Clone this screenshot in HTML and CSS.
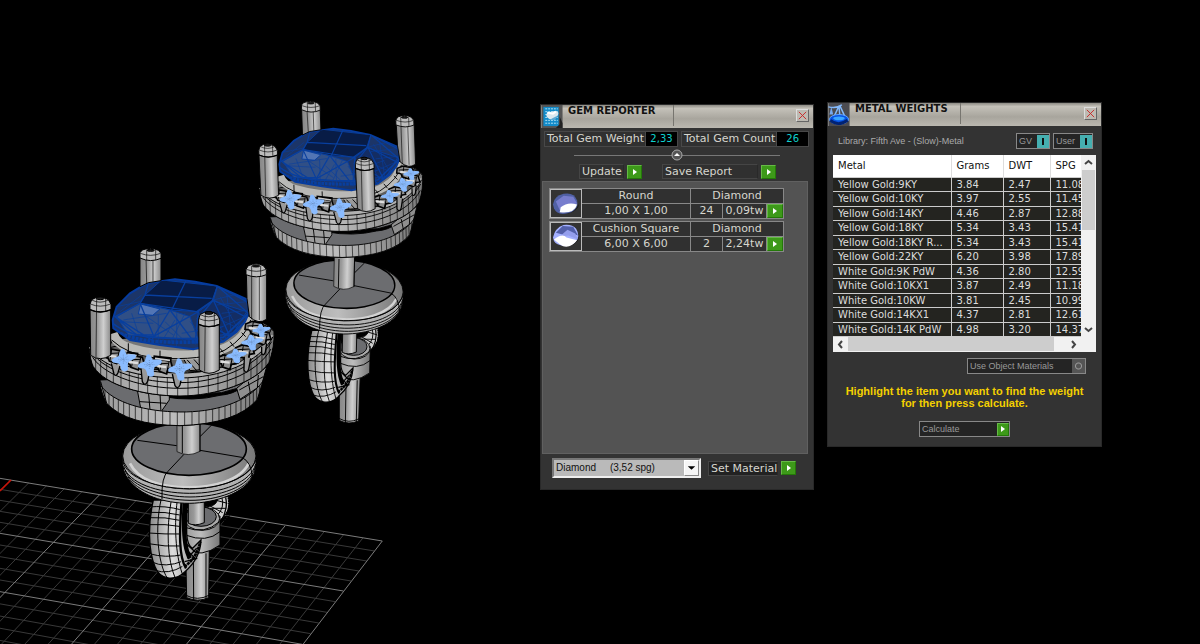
FILE: index.html
```html
<!DOCTYPE html>
<html lang="en">
<head>
<meta charset="utf-8">
<title>Gem Reporter</title>
<link rel="stylesheet" href="styles.css">
</head>
<body>
<main class="viewport">
<svg class="scene" width="540" height="644" viewBox="0 0 540 644" aria-hidden="true">
  <defs>
    <linearGradient id="post"><stop offset="0" stop-color="#858585"/><stop offset=".35" stop-color="#999"/><stop offset=".65" stop-color="#cfcfcf"/><stop offset="1" stop-color="#8a8a8a"/></linearGradient>
    <linearGradient id="rim"><stop offset="0" stop-color="#9a9a9a"/><stop offset=".45" stop-color="#bdbdbd"/><stop offset="1" stop-color="#777"/></linearGradient>
    <linearGradient id="tube"><stop offset="0" stop-color="#888"/><stop offset=".45" stop-color="#ddd"/><stop offset="1" stop-color="#888"/></linearGradient>
    <clipPath id="gemclip"><path d="M98 240L110 200L150 160L200 130L285 118L345 125L410 138L500 178L508 215L495 245L470 275L430 305L340 328L240 315L150 300L100 265Z"/></clipPath>
    <clipPath id="hookclip"><path d="M160 300C144 370 144 450 165 500C180 540 225 545 255 515C240 500 236 440 240 300Z"/></clipPath>
    <clipPath id="lowerclip"><path d="M62 436C100 490 200 515 300 516S500 490 548 425L532 478Q470 552 300 557Q140 555 80 490Z"/></clipPath>
    <clipPath id="upperclip"><path d="M30 325C70 385 180 413 300 413S540 365 578 290Q580 330 565 368C530 425 410 468 300 468S75 435 42 382Q32 360 30 325Z"/></clipPath>
    <g id="pillar">
      <path d="M0 28L2 175Q30 195 62 175V28Z" fill="url(#post)" stroke="#000" stroke-width="3"/>
      <path d="M0 38V22L5 8Q30-8 55 8L63 22V38Q30 52 0 38Z" fill="#bcbcbc" stroke="#000" stroke-width="3"/>
      <path d="M1 21Q30 34 62 21M5 9Q30 22 55 9M20 0L18 180M47 2V44" fill="none" stroke="#000" stroke-width="2"/>
      <path d="M0 38Q30 52 63 38" fill="none" stroke="#000" stroke-width="4"/>
      <ellipse cx="31" cy="4" rx="12" ry="4" fill="#222"/>
    </g>
    <g id="star">
      <path d="M-6-27Q-1-31 3-24L8-12Q22-14 34-12Q38-9 32-4L15 5Q9 10 12 30Q5 38-4 30Q-6 14-14 10L-30 7Q-35 3-28-1L-12-8Z" fill="#8bbcff" stroke="#8bbcff" stroke-width="5"/>
      <path d="M-11-8L10 10M-11 6L12-8M-15 0H16M0-14V13" stroke="#6485b4" stroke-width="2" stroke-dasharray="3 3"/>
    </g>
    <g id="prong">
      <path d="M-28-12L-8-20L22-14L28 6L14 8L10 24L-12 16L-16 6L-30 4Z" fill="#8d8d8d" stroke="#000" stroke-width="5"/>
      <path d="M-23-6L16-8M-5-18L-10 14M17-12L10 22" stroke="#000" stroke-width="3"/>
      <path d="M-18 0L9 3" stroke="#ddd" stroke-width="7"/>
    </g>
    <g id="base">
      <g transform="translate(100 400) scale(.3333)" fill="none" stroke="#000" stroke-width="3">
        <path d="M257 450L260 593Q292 608 326 593L328 450Z" fill="url(#post)"/>
        <path d="M280 455L281 602M318 460V600M258 586Q292 604 327 586"/>
        <path d="M310 320C340 322 355 310 352 290H386Q394 335 361 360L335 338Z" fill="#ccc"/>
        <path d="M365 290Q376 323 350 348M325 315L368 338M330 325L378 325M345 300L382 310M320 336L358 351"/>
        <path d="M388 292Q396 337 370 376" stroke-width="11" stroke-dasharray="6 2"/>
        <path d="M377 292Q385 330 362 365" stroke-width="4"/>
        <path d="M255 365V450Q305 475 360 435V348Z" fill="url(#rim)"/>
        <ellipse cx="306" cy="356" rx="53" ry="35" fill="#aaa"/>
        <ellipse cx="303" cy="350" rx="46" ry="29" fill="#6c6d70"/>
        <path d="M265 300V370Q285 380 313 368V300Z" fill="url(#post)"/>
        <path d="M255 382Q315 405 358 365M256 405Q320 430 360 395"/>
        <path d="M160 300C144 370 144 450 165 500C180 540 225 545 255 515Q301 475 303 420L278 445Q262 438 260 400V300Z" fill="url(#tube)" stroke-width="4"/>
        <g clip-path="url(#hookclip)">
          <path d="M183 300C165 380 172 490 203 536M214 300C198 390 202 480 226 535M232 300C220 390 230 480 250 530"/>
          <path d="M145 321Q195 316 245 330M145 337Q195 334 245 346M145 353Q195 350 245 362M145 374Q195 371 245 380M145 399Q195 403 245 402M145 431Q195 441 245 438M148 461Q195 475 250 464M155 486Q195 505 250 483M165 511Q205 525 250 498"/>
        </g>
        <path d="M245 300C238 400 236 470 258 505" stroke-width="7"/>
        <path d="M255 300C248 390 255 450 270 475" stroke-width="13"/>
        <path d="M253 500Q290 475 301 425" stroke-width="8" stroke-dasharray="9 2"/>
        <path d="M257 430L290 460M255 445L285 475M262 475L290 445M254 485L292 475" stroke-width="4"/>
        <path d="M68 178Q66 215 87 240C120 285 190 310 268 310C350 309 430 278 455 235Q470 215 468 170Z" fill="#b2b2b2"/>
        <ellipse cx="268" cy="168" rx="200" ry="99" fill="url(#rim)"/>
        <path d="M90 190C120 250 205 262 268 262S420 245 446 190" stroke="#d2d2d2" stroke-width="8"/>
        <ellipse cx="267" cy="147" rx="172" ry="79" fill="#6c6d70" stroke-width="5"/>
        <path d="M69 185C80 235 175 266 268 266S450 235 467 180M71 199C85 248 170 279 268 280S454 246 467 192M76 213C95 260 185 291 270 291S450 261 465 204M84 230C110 275 190 300 270 301S440 271 460 222" stroke-width="3"/>
        <path d="M112 121L230 137M335 75L300 110M300 151L425 172Q455 185 457 235M252 163L204 214Q184 230 186 297"/>
        <path d="M231 50V155Q264 173 300 154V50Z" fill="url(#post)" stroke-width="2"/>
        <path d="M247 65V160M300 60V155"/>
      </g>
    </g>
    <g id="crown">
      <g transform="translate(80 240) scale(.3333)" fill="none" stroke="#000" stroke-width="3">
        <path d="M60 420Q60 455 80 490Q140 555 300 557Q470 550 532 478L558 400Z" fill="#6b6c6f"/>
        <path d="M250 470Q340 486 420 466Q460 463 490 440L425 458Q370 462 280 458Z" fill="#000"/>
        <path d="M172 450L183 510L240 520L268 480V450Z" fill="#9d9d9d"/>
        <path d="M205 450L210 510M180 485L260 490M240 460L243 518"/>
        <path d="M470 445L480 478L545 435L560 380L500 420Z" fill="#8f8f8f"/>
        <path d="M478 450L550 410M505 425L512 465M535 405L532 445"/>
        <g clip-path="url(#lowerclip)">
          <rect x="55" y="420" width="500" height="140" fill="url(#rim)" stroke="none"/>
          <path d="M75 420V560M87 420V560M100 420V560M115 420V560M131 420V560M148 420V560M166 420V560M185 420V560M205 420V560M226 420V560M248 420V560M270 420V560M292 420V560M314 420V560M336 420V560M357 420V560M378 420V560M398 420V560M417 420V560M435 420V560M452 420V560M468 420V560M483 420V560M497 420V560M509 420V560M520 420V560M530 420V560M539 420V560" stroke-width="2"/>
        </g>
        <path d="M62 436C100 490 200 515 300 516S500 490 548 425M80 490Q140 555 300 557Q470 552 532 478M62 425L80 490M558 395L532 478"/>
        <path d="M28 318Q30 360 42 382C75 435 190 468 300 468S530 425 565 370Q585 320 582 275Q560 240 500 240L100 300Z" fill="#777"/>
        <g clip-path="url(#upperclip)">
          <rect x="20" y="270" width="570" height="210" fill="url(#rim)" stroke="none"/>
          <path d="M47 320V470M62 320V470M80 320V470M100 320V470M123 320V470M148 320V470M175 320V470M203 320V470M232 320V470M262 320V470M293 320V470M324 320V470M355 320V470M385 320V470M414 320V470M442 320V470M468 320V470M492 320V470M513 320V470M531 300V470M546 290V470M558 280V470M568 280V470" stroke-width="2"/>
        </g>
        <path d="M36 338C75 395 190 428 300 428S530 383 575 305M38 352C75 409 190 445 300 445S530 404 573 327M42 382C75 435 190 468 300 468S530 425 565 370"/>
        <path d="M32 320C70 378 180 405 300 407S540 360 575 285" stroke="#b0b0b0" stroke-width="12"/>
        <path d="M30 312C65 368 180 398 300 399S530 350 568 280M30 326C70 385 180 414 300 414S540 368 579 290" stroke-width="3"/>
        <path d="M80 325L110 318L350 345L420 350L540 250L575 265L555 310L475 370L360 395L220 388L110 360Z" fill="#5c5c5c"/>
        <path d="M310 355L360 350L420 340L410 385L330 392Z" fill="#999"/>
        <path d="M320 358L350 392M338 354L370 390M40 310L85 325L98 300M30 320L90 345"/>
        <path d="M99 280Q110 315 155 326Q240 351 350 344Q430 338 475 300Q505 275 510 230" stroke="#b9b9b6" stroke-width="28"/>
        <path d="M95 300Q140 343 225 354Q370 363 435 330Q500 290 512 240M145 310V340M240 332V357M420 325L430 337M450 305L462 320M485 278L497 290"/>
        <path d="M98 240L110 200L150 160L200 130L285 118L345 125L410 138L500 178L508 215L495 245L470 275L430 305L340 328L240 315L150 300L100 265Z" fill="#1c3568" stroke="#063ca0" stroke-width="6"/>
        <g clip-path="url(#gemclip)" stroke="#083f9f">
          <path d="M245 120L412 138L395 185L355 215L272 210L180 190L195 165Z" fill="#081c46"/>
          <path d="M180 190L270 210L330 230L355 300L145 285L110 230Z" fill="#304f86"/>
          <path d="M182 192L240 207L218 226L175 222Z" fill="#5275b4"/>
          <path d="M355 215L400 183L500 215L460 280L385 290Z" fill="#142d63"/>
          <g stroke-width="4">
            <path d="M205 130L195 165L180 190L350 215L400 180L412 138L510 190M345 125L412 138M320 118L275 210M195 165L395 175M180 190L105 230L170 285L220 285L180 190M270 210L215 300L105 230M270 210L345 310L355 215L220 290M400 180L355 235L450 290L400 180L505 235L430 305L350 235M412 138L505 220"/>
          </g>
          <path stroke-width="2" d="M110 200L180 185M120 215L185 165M130 240L260 220M155 220L175 280M120 245L220 250M200 230L280 285M235 225L235 320M255 245L320 310M285 240L245 305M290 220L290 330M315 220L270 310M330 245L385 310M305 280L430 260M380 220L475 265M395 210L440 300M420 170L470 260M440 160L455 290M400 180L480 160M410 195L500 185M425 220L510 210M360 260L455 225M370 285L495 230"/>
          <path stroke-width="11" stroke-dasharray="9 3" d="M100 270Q150 300 240 305T420 300"/>
          <path stroke-width="5" d="M98 250Q150 290 240 294T430 292L505 220"/>
        </g>
        <use href="#prong" x="165" y="366"/><use href="#prong" x="250" y="378"/><use href="#prong" x="100" y="347"/>
        <use href="#prong" x="440" y="365"/><use href="#prong" x="495" y="335"/><use href="#prong" x="545" y="292"/><use href="#prong" x="525" y="264"/>
        <path d="M220 352L275 358M140 340L175 344" stroke="#000" stroke-width="12"/><path d="M225 355L270 361M142 343L170 347" stroke="#ccc" stroke-width="5"/>
        <path d="M94 370L102 402Q108 412 114 398L120 378M183 385L187 425Q195 442 203 424L210 390M277 402L285 437Q293 450 300 435L307 403M493 350L492 390Q500 404 506 388L512 355M545 320L545 340Q550 350 556 337L560 310" fill="#999" stroke-width="4"/>
        <use href="#star" x="130" y="358"/><use href="#star" x="208" y="374"/><use href="#star" x="299" y="386"/>
        <use href="#star" transform="translate(468 346) scale(.85 .65)"/><use href="#star" transform="translate(515 306) scale(.9 .7)"/><use href="#star" transform="translate(543 270) scale(.75 .6)"/>
        <path d="M180 40V140L205 128L243 122V40Z" fill="url(#post)"/>
        <path d="M198 50L200 131M219 55V125" stroke-width="2"/>
        <path d="M180 54V38L187 30Q212 20 235 31L243 40V55Q212 69 180 54Z" fill="#bcbcbc"/><path d="M181 40Q212 52 242 40M200 28V60M227 29V60" stroke-width="2"/><ellipse cx="212" cy="31" rx="11" ry="3" fill="#222"/>
        <path d="M499 95L501 175L508 230Q535 255 560 238V95Z" fill="url(#post)"/>
        <path d="M515 110V238M538 110V240" stroke-width="2"/>
        <path d="M498 104V88L505 77Q530 66 550 77L559 88V104Q530 117 498 104Z" fill="#bcbcbc"/><path d="M499 88Q530 100 558 88M515 77V110M542 77V110" stroke-width="2"/><ellipse cx="528" cy="78" rx="11" ry="3" fill="#222"/>
        <use href="#pillar" x="30" y="171"/><use href="#pillar" x="356" y="215"/>
      </g>
    </g>
  </defs>
  <g transform="translate(0 460) scale(.3333)" fill="none">
    <path id="grid-minor" stroke="#393939" stroke-width="3"/>
    <path id="grid-major" stroke="#7b7b7b" stroke-width="3"/>
    <path d="M33 60L0 93" stroke="#c81408" stroke-width="5"/>
  </g>
  <use href="#base" transform="matrix(.88 .022 -.02 .917 187 -131.7)"/>
  <use href="#crown" transform="matrix(.885 .005 .03 .88 170 -118)"/>
  <use href="#base"/>
  <use href="#crown"/>
</svg>

<section class="panel gem" aria-label="Gem Reporter">
  <header class="bar">
    <svg class="logo" viewBox="0 0 22 24" aria-hidden="true"><rect width="22" height="24" fill="#555"/><path d="M2 2H18V22H2Z" fill="#128bc9"/><path d="M4 4H17M4 7H17M4 10H17M4 13H17M4 16H17M4 19H17" stroke="#b7e4f7" stroke-dasharray="2 1"/><path d="M5 10Q6 7 10 7L15 6Q19 7 17 11Q15 15 10 15Q5 14 5 10Z" fill="#dbe8ef"/><path d="M6 8L12 9L15 7" stroke="#fff" stroke-width="2" fill="none"/><path d="M9 15L17 11L14 16Z" fill="#5ca9d4"/><path d="M19 12L22 19V24H15L19 20Z" fill="#222"/></svg>
    <h2 class="title">GEM REPORTER</h2>
    <button class="close" aria-label="Close gem reporter"><svg viewBox="0 0 12 12"><path d="M2 2L10 10M10 2L2 10"/></svg></button>
  </header>
  <div class="totals">
    <span class="total weight"><span class="total-name">Total Gem Weight</span><output class="total-value">2,33</output></span>
    <span class="total count"><span class="total-name">Total Gem Count</span><output class="total-value">26</output></span>
  </div>
  <div class="divider"><button class="knob" aria-label="Collapse"><svg viewBox="0 0 12 12"><circle cx="6" cy="6" r="5" fill="#555" stroke="#aaa"/><path d="M3 7L6 4L9 7Z" fill="#fff"/></svg></button></div>
  <div class="actions">
    <button class="action update"><span class="action-name">Update</span><span class="go"></span></button>
    <button class="action save"><span class="action-name">Save Report</span><span class="go"></span></button>
  </div>
  <ul class="gems">
    <li class="item">
      <svg class="thumb" viewBox="0 0 31 28" aria-hidden="true"><path d="M8 22Q20 28 28 18L29 14Q25 27 8 22Z" fill="#111"/><path d="M2 15Q3 6 13 4Q24 2 27 11Q29 19 21 23Q7 28 3 19Z" fill="#5060a4"/><path d="M5 12L13 6L23 7L27 14L17 17L9 21Z" fill="#777dce"/><path d="M10 18Q17 12 27 15Q24 25 9 23Z" fill="#fff"/></svg>
      <span class="cell shape">Round</span><span class="cell kind">Diamond</span>
      <span class="cell">1,00 X 1,00</span><span class="cell">24</span><span class="cell">0,09tw</span>
      <button class="go" aria-label="Show round gems"></button>
    </li>
    <li class="item">
      <svg class="thumb" viewBox="0 0 31 28" aria-hidden="true"><path d="M8 22Q20 28 28 18L29 14Q25 27 8 22Z" fill="#111"/><path d="M2 15Q4 5 13 2Q22 1 26 6Q31 14 25 20Q18 26 10 23Q3 22 2 15Z" fill="#a4b0ff"/><path d="M5 10L12 3L23 4L28 13L19 10L12 12Z" fill="#525fa9"/><path d="M9 14L17 7L25 11L28 17L18 13Z" fill="#949eed"/><path d="M3 17Q12 10 16 15L27 18Q18 29 9 22Z" fill="#fff"/></svg>
      <span class="cell shape">Cushion Square</span><span class="cell kind">Diamond</span>
      <span class="cell">6,00 X 6,00</span><span class="cell">2</span><span class="cell">2,24tw</span>
      <button class="go" aria-label="Show cushion square gems"></button>
    </li>
  </ul>
  <footer class="material">
    <span class="picker">
      <select class="select" aria-label="Material"><option>Diamond &nbsp; &nbsp; (3,52 spg)</option></select>
      <svg class="arrow" viewBox="0 0 14 14" aria-hidden="true"><path d="M3 5H11L7 9Z"/></svg>
    </span>
    <button class="action set"><span class="action-name">Set Material</span><span class="go"></span></button>
  </footer>
</section>

<section class="panel metal" aria-label="Metal Weights">
  <header class="bar">
    <svg class="logo" viewBox="0 0 22 24" aria-hidden="true"><rect width="22" height="24" fill="#4b4b50"/><path d="M0 4Q8 6 14 2M11 3L5 16M12 3L18 16M11 3L12 15" stroke="#84b9fa" stroke-width="1.500" fill="none"/><path d="M3 4L1 12H5Z" fill="#77a9ed"/><ellipse cx="11" cy="17" rx="10" ry="5" fill="#0754e5" stroke="#65a7ff"/><path d="M2 18Q10 25 20 18" stroke="#012273" stroke-width="3" fill="none"/><ellipse cx="11" cy="16" rx="6" ry="2" fill="#3ba6ff"/></svg>
    <h2 class="title">METAL WEIGHTS</h2>
    <button class="close" aria-label="Close metal weights"><svg viewBox="0 0 12 12"><path d="M2 2L10 10M10 2L2 10"/></svg></button>
  </header>
  <div class="library">
    <p class="library-name">Library: Fifth Ave - (Slow)-Metal</p>
    <label class="toggle">GV<input class="switch" type="checkbox" checked></label>
    <label class="toggle">User<input class="switch" type="checkbox" checked></label>
  </div>
  <div class="grid">
    <div class="clip">
    <table class="weights">
      <colgroup><col class="c1"><col class="c2"><col class="c3"><col class="c4"></colgroup>
      <thead><tr><th>Metal</th><th>Grams</th><th>DWT</th><th>SPG</th></tr></thead>
      <tbody>
        <tr><td>Yellow Gold:9KY</td><td>3.84</td><td>2.47</td><td>11.08</td></tr>
        <tr><td>Yellow Gold:10KY</td><td>3.97</td><td>2.55</td><td>11.45</td></tr>
        <tr><td>Yellow Gold:14KY</td><td>4.46</td><td>2.87</td><td>12.88</td></tr>
        <tr><td>Yellow Gold:18KY</td><td>5.34</td><td>3.43</td><td>15.41</td></tr>
        <tr><td>Yellow Gold:18KY R...</td><td>5.34</td><td>3.43</td><td>15.41</td></tr>
        <tr><td>Yellow Gold:22KY</td><td>6.20</td><td>3.98</td><td>17.89</td></tr>
        <tr><td>White Gold:9K PdW</td><td>4.36</td><td>2.80</td><td>12.59</td></tr>
        <tr><td>White Gold:10KX1</td><td>3.87</td><td>2.49</td><td>11.18</td></tr>
        <tr><td>White Gold:10KW</td><td>3.81</td><td>2.45</td><td>10.99</td></tr>
        <tr><td>White Gold:14KX1</td><td>4.37</td><td>2.81</td><td>12.61</td></tr>
        <tr><td>White Gold:14K PdW</td><td>4.98</td><td>3.20</td><td>14.37</td></tr>
      </tbody>
    </table>
    </div>
    <div class="vscroll">
      <svg class="chev" viewBox="0 0 15 15"><path d="M4 9L7.500 6L11 9"/></svg>
      <span class="vthumb"></span>
      <svg class="chev end" viewBox="0 0 15 15"><path d="M4 6L7.500 9L11 6"/></svg>
    </div>
    <div class="hscroll">
      <svg class="chev" viewBox="0 0 15 15"><path d="M9 4L6 7.500L9 11"/></svg>
      <span class="hthumb"></span>
      <svg class="chev" viewBox="0 0 15 15"><path d="M6 4L9 7.500L6 11"/></svg>
    </div>
  </div>
  <label class="toggle objects">Use Object Materials<input class="dot" type="checkbox"></label>
  <p class="hint">Highlight the item you want to find the weight for then press calculate.</p>
  <button class="toggle calc">Calculate<span class="go"></span></button>
</section>
</main>
<script src="grid.js"></script>
</body>
</html>
```
FILE: styles.css
```css
* { box-sizing: border-box; }
body { margin: 0; background: #000; font: 11px/14px "DejaVu Sans", Verdana, sans-serif; }
button { padding: 0; border: 0; background: none; color: inherit; font: inherit; }
h2, p, ul { margin: 0; padding: 0; }
.viewport { position: relative; min-height: 100vh; overflow: hidden; }
.scene { display: block; }

.panel { position: absolute; display: flex; flex-direction: column; background: #333; border: 1px solid #292929; color: #d6d6ce; }
.gem { left: 540px; top: 104px; width: 274px; }
.metal { left: 827px; top: 102px; width: 275px; }

.bar { display: flex; align-items: flex-start; height: 23px; background: linear-gradient(#8c8a83, #c4c1b9 15%, #a8a59d 60%, #bbb8b0); }
.logo { width: 22px; height: 23px; flex: none; }
.title { width: 111px; height: 21px; padding-left: 5px; border-right: 1px solid #77756f; color: #111; font-size: 10px; line-height: 12px; white-space: nowrap; }
.close { width: 13px; height: 13px; margin: 4px 4px 0 auto; background: #bdbab2; border: 1px solid; border-color: #ddd #666 #666 #ddd; }
.close svg { display: block; width: 11px; height: 11px; fill: none; stroke: #cc2222; stroke-width: 1; }

.totals { display: flex; gap: 3px; padding: 3px 4px 0 3px; }
.total { display: flex; height: 16px; background: #000; border: 1px solid #484848; line-height: 14px; }
.weight { flex: 134; }
.count { flex: 128; }
.total-name { padding: 0 1px 0 2px; background: #303030; border-right: 1px solid #484848; white-space: nowrap; }
.total-value { flex: 1; color: #0ed1cf; text-align: center; font-size: 10px; }
.divider { display: flex; justify-content: center; margin: 1px 33px 0; height: 14px; background: linear-gradient(#777, #777) center / 100% 1px no-repeat; }
.knob { width: 12px; height: 12px; margin-top: 1px; }
.knob svg { display: block; }
.actions { display: flex; gap: 20px; padding: 2px 38px 0; }
.action { display: flex; align-items: center; gap: 3px; text-align: left; }
.action-name { height: 15px; padding-left: 2px; border: 1px solid #454545; border-right-color: #292929; background: #303030; line-height: 13px; white-space: nowrap; flex: none; }
.update .action-name { width: 45px; }
.save .action-name { width: 96px; }
.set .action-name { width: 70px; background: #222; }
.go { display: flex; align-items: center; justify-content: center; flex: none; width: 15px; height: 14px; background: #3d9919; border: 1px solid; border-color: #66b947 #247809 #247809 #66b947; }
.go::after { content: ""; width: 0; border-left: 4px solid #fff; border-top: 3px solid transparent; border-bottom: 3px solid transparent; }
.gems { height: 273px; margin: 2px 5px 0 1px; padding: 6px 23px 0 6px; border: 1px solid #606060; background: #535353; list-style: none; display: flex; flex-direction: column; gap: 2px; }
.item { display: grid; grid-template-columns: 32px 109px 32px 1fr 16px; grid-template-rows: 15px 14px; background: #303030; border: 1px solid #888; text-align: center; }
.thumb { grid-row: 1 / 3; width: 32px; height: 29px; border: 1px solid #bbb; background: #333; }
.cell { border-right: 1px solid #888; line-height: 14px; white-space: nowrap; }
.shape, .kind { border-bottom: 1px solid #888; line-height: 13px; }
.kind { grid-column: 3 / 6; border-right: 0; }
.item .go { width: 16px; }
.material { display: flex; align-items: center; justify-content: space-between; padding: 4px 17px 11px 11px; }
.picker { position: relative; display: block; width: 149px; }
.select { appearance: none; display: block; width: 100%; height: 20px; padding: 0 2px; border: 2px solid; border-color: #777 #eee #eee #777; border-radius: 0; background: #bababa; color: #111; font: 10px/14px "Liberation Sans", Arial, sans-serif; }
.arrow { position: absolute; right: 2px; top: 2px; width: 15px; height: 16px; background: #f5f5f5; border: 1px solid; border-color: #fff #888 #888 #fff; }

.library { display: flex; align-items: center; gap: 3px; height: 29px; padding: 1px 8px 0 10px; }
.library-name { flex: 1; color: #aaa; font: 9px/12px "Liberation Sans", Arial, sans-serif; white-space: nowrap; }
.toggle { display: flex; align-items: center; justify-content: space-between; gap: 5px; height: 16px; padding-left: 2px; border: 1px solid #888; background: #242424; color: #999; font: 9px/12px "Liberation Sans", Arial, sans-serif; white-space: nowrap; }
.switch { appearance: none; width: 12px; height: 13px; margin: 0; background: linear-gradient(#111, #111) center / 2px 7px no-repeat #45afb0; }
.dot { appearance: none; width: 13px; height: 14px; margin: 0; background: radial-gradient(circle, #555 2px, #999 3px, #555 4px); }
.grid { display: grid; grid-template-columns: 1fr 15px; margin: 0 5px; background: #f1f1f1; }
.clip { overflow: hidden; min-width: 0; }
.weights { width: 272px; height: 182px; table-layout: fixed; border-collapse: collapse; background: #fff; font-size: 10px; line-height: 12px; }
.c1 { width: 118px; }
.c2 { width: 52px; }
.c3 { width: 47px; }
.weights th { height: 22px; padding: 0 5px; color: #111; font-weight: 400; text-align: left; border-right: 1px solid #ddd; }
.weights td { padding: 1px 5px 0; background: #242420; color: #ddd; border: 1px solid #ccc; border-left: 0; white-space: nowrap; }
.vscroll { display: flex; flex-direction: column; align-items: center; }
.vthumb { width: 13px; height: 60px; background: #cdcdcd; }
.chev { width: 15px; height: 15px; flex: none; fill: none; stroke: #444; stroke-width: 2; }
.end { margin-top: auto; }
.hscroll { grid-column: 1 / 3; display: flex; padding-right: 15px; }
.hthumb { flex: 1; height: 14px; margin-right: 12px; background: #cdcdcd; }
.objects { align-self: flex-end; width: 119px; margin: 6px 15px 0 0; }
.hint { align-self: center; width: 240px; margin: 11px 0 12px; color: #f4d000; text-align: center; font: bold 11px/12px "Liberation Sans", Arial, sans-serif; }
.calc { align-self: center; width: 91px; margin-bottom: 9px; }
.calc .go { width: 12px; height: 13px; }
```
FILE: grid.js
```js
const step = 5;
const topX = [[33, 60], [300, 103], [570, 150], [855, 198], [1147, 243]];
const bottomX = [[-470, 552], [-135, 552], [215, 552], [560, 552], [910, 552]];
const leftY = [[0, 55], [0, 220], [0, 395], [0, 578]];
const rightY = [[1147, 243], [1030, 393], [907, 553], [775, 725]];
const paths = { major: "", minor: "" };

function mix(a, b, t) {
  return [a[0] + (b[0] - a[0]) * t, a[1] + (b[1] - a[1]) * t];
}

function family(from, to) {
  for (let i = 0; i < from.length; i++) {
    for (let k = 0; k < step; k++) {
      if (k && i === from.length - 1) break;
      const next = Math.min(i + 1, from.length - 1);
      const a = mix(from[i], from[next], k / step);
      const b = mix(to[i], to[next], k / step);
      paths[k ? "minor" : "major"] += `M${a}L${b}`;
    }
  }
}

family(topX, bottomX);
family(leftY, rightY);
document.getElementById("grid-minor").setAttribute("d", paths.minor);
document.getElementById("grid-major").setAttribute("d", paths.major);
```
